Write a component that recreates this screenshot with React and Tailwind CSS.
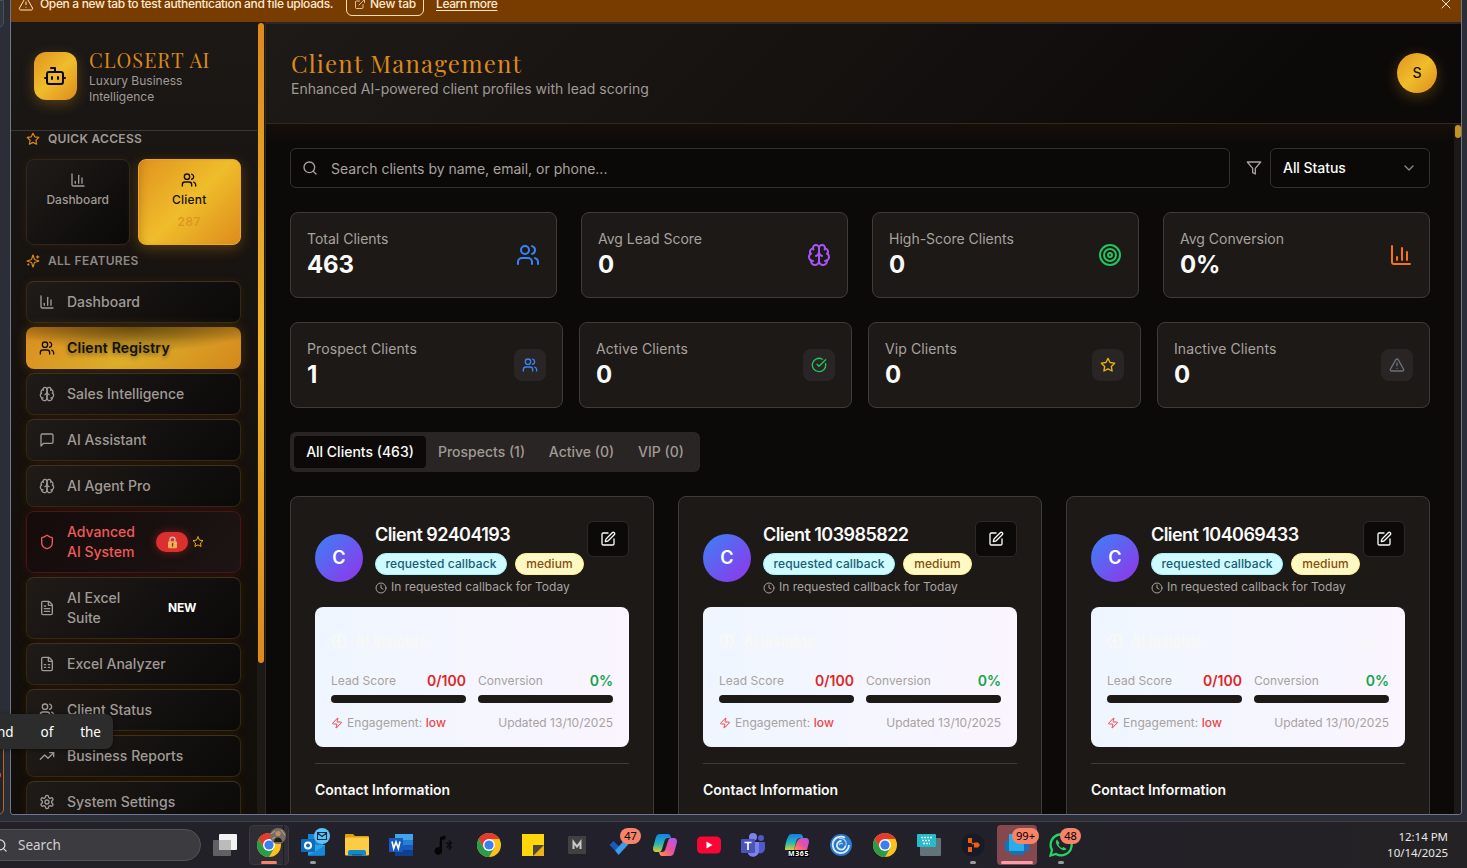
import React from "react";
import {
  Bot, Users, Shield, FileText, FileSpreadsheet, TrendingUp, Search, ChevronDown, Target,
  CircleCheckBig, TriangleAlert, SquarePen, Clock, Zap, RefreshCw, ExternalLink, X, ChartColumn,
} from "lucide-react";

function Glyph({ className, children }) {
  return (
    <svg className={className} viewBox="0 0 24 24" fill="none" stroke="currentColor" strokeWidth="2" strokeLinecap="round" strokeLinejoin="round">
      {children}
    </svg>
  );
}
const Brain = ({ className }) => (
  <Glyph className={className}>
    <path d="M12 5a3 3 0 1 0-5.997.125 4 4 0 0 0-2.526 5.77 4 4 0 0 0 .556 6.588A4 4 0 1 0 12 18Z" />
    <path d="M12 5a3 3 0 1 1 5.997.125 4 4 0 0 1 2.526 5.77 4 4 0 0 1-.556 6.588A4 4 0 1 1 12 18Z" />
    <path d="M15 13a4.5 4.5 0 0 1-3-4 4.5 4.5 0 0 1-3 4" />
    <path d="M17.599 6.5a3 3 0 0 0 .399-1.375M6.003 5.125A3 3 0 0 0 6.401 6.5M3.477 10.896a4 4 0 0 1 .585-.396M19.938 10.5a4 4 0 0 1 .585.396M6 18a4 4 0 0 1-1.967-.516M19.967 17.484A4 4 0 0 1 18 18" />
  </Glyph>
);
const Star = ({ className }) => (
  <Glyph className={className}>
    <polygon points="12 2 15.09 8.26 22 9.27 17 14.14 18.18 21.02 12 17.77 5.82 21.02 7 14.14 2 9.27 8.91 8.26 12 2" />
  </Glyph>
);
const Funnel = ({ className }) => (
  <Glyph className={className}>
    <polygon points="22 3 2 3 10 12.46 10 19 14 21 14 12.46 22 3" />
  </Glyph>
);
const Message = ({ className }) => (
  <Glyph className={className}>
    <path d="M21 15a2 2 0 0 1-2 2H7l-4 4V5a2 2 0 0 1 2-2h14a2 2 0 0 1 2 2z" />
  </Glyph>
);
const Sparkles = ({ className }) => (
  <Glyph className={className}>
    <path d="M9.937 15.5A2 2 0 0 0 8.5 14.063l-6.135-1.582a.5.5 0 0 1 0-.962L8.5 9.936A2 2 0 0 0 9.937 8.5l1.582-6.135a.5.5 0 0 1 .963 0L14.063 8.5A2 2 0 0 0 15.5 9.937l6.135 1.581a.5.5 0 0 1 0 .964L15.5 14.063a2 2 0 0 0-1.437 1.437l-1.582 6.135a.5.5 0 0 1-.963 0z" />
    <path d="M20 3v4M22 5h-4M4 17v2M5 18H3" />
  </Glyph>
);
const Gear = ({ className }) => (
  <Glyph className={className}>
    <path d="M12.22 2h-.44a2 2 0 0 0-2 2v.18a2 2 0 0 1-1 1.73l-.43.25a2 2 0 0 1-2 0l-.15-.08a2 2 0 0 0-2.73.73l-.22.38a2 2 0 0 0 .73 2.73l.15.1a2 2 0 0 1 1 1.72v.51a2 2 0 0 1-1 1.74l-.15.09a2 2 0 0 0-.73 2.73l.22.38a2 2 0 0 0 2.73.73l.15-.08a2 2 0 0 1 2 0l.43.25a2 2 0 0 1 1 1.73V20a2 2 0 0 0 2 2h.44a2 2 0 0 0 2-2v-.18a2 2 0 0 1 1-1.73l.43-.25a2 2 0 0 1 2 0l.15.08a2 2 0 0 0 2.73-.73l.22-.39a2 2 0 0 0-.73-2.73l-.15-.08a2 2 0 0 1-1-1.74v-.5a2 2 0 0 1 1-1.74l.15-.09a2 2 0 0 0 .73-2.73l-.22-.38a2 2 0 0 0-2.73-.73l-.15.08a2 2 0 0 1-2 0l-.43-.25a2 2 0 0 1-1-1.73V4a2 2 0 0 0-2-2z" />
    <circle cx="12" cy="12" r="3" />
  </Glyph>
);

const gold = "bg-[linear-gradient(135deg,#e1931f_0%,#efbd2b_50%,#dd8c1c_100%)]";

function Banner() {
  return (
    <div className="flex h-[22px] shrink-0 items-start overflow-hidden bg-[#783c00] pl-[7px] pr-[7px] text-[12px] leading-4 text-[#ffe9cf]">
      <TriangleAlert className="mt-[-4px] size-4" strokeWidth={1.5} />
      <span className="ml-[6px] w-[306px] mt-[-4px] whitespace-nowrap tracking-[-0.35px] font-medium">Open a new tab to test authentication and file uploads.</span>
      <div className="mt-[-9px] flex h-[25px] w-[78px] shrink-0 items-center justify-center gap-1 rounded-[6px] border border-[#ffe0b8] font-medium tracking-[-0.2px]">
        <ExternalLink className="size-3" strokeWidth={1.5} />
        <span>New tab</span>
      </div>
      <span className="ml-3 mt-[-4px] font-medium tracking-[-0.4px] underline underline-offset-2">Learn more</span>
      <X className="ml-auto mt-[-4px] size-4" strokeWidth={1.5} />
    </div>
  );
}

const navItems = [
  { icon: ChartColumn, label: "Dashboard" },
  { icon: Users, label: "Client Registry", active: true },
  { icon: Brain, label: "Sales Intelligence" },
  { icon: Message, label: "AI Assistant" },
  { icon: Brain, label: "AI Agent Pro" },
  { icon: Shield, label: "Advanced AI System", danger: true },
  { icon: FileText, label: "AI Excel Suite", fresh: true },
  { icon: FileSpreadsheet, label: "Excel Analyzer" },
  { icon: Users, label: "Client Status" },
  { icon: TrendingUp, label: "Business Reports" },
  { icon: Gear, label: "System Settings" },
];

function NavItem({ icon: Icon, label, active, danger, fresh }) {
  const tone = active
    ? "border-transparent bg-origin-border bg-[radial-gradient(ellipse_55%_60%_at_50%_0%,rgba(60,36,5,0.6)_0%,rgba(60,36,5,0.35)_50%,rgba(60,36,5,0)_100%),linear-gradient(180deg,rgba(70,42,5,0.3)_0%,rgba(70,42,5,0)_35%),linear-gradient(135deg,#d98c1f_0%,#dcae2a_50%,#d4881c_100%)] text-[#12100c] shadow-[0_0_12px_rgba(217,145,30,0.25)] [text-shadow:0_2px_4px_rgba(0,0,0,0.45)]"
    : danger
    ? "border-[#4d1417] bg-[linear-gradient(135deg,#140b0a,#1c1513)] text-[#ef5a5a] shadow-[0_0_10px_rgba(150,20,20,0.2)]"
    : "border-[#36270f] border-t-[#40301f] bg-[linear-gradient(135deg,#1f1b18_0%,#0b0a09_100%)] text-[#a09a95] shadow-[0_0_10px_rgba(190,115,15,0.10)]";
  return (
    <div className={"flex shrink-0 items-center rounded-lg border px-3 py-[10px] " + tone}>
      <Icon className="size-4 shrink-0" />
      <span className={"ml-3 text-sm " + (danger ? "w-[77px] " : fresh ? "w-[64px] " : "whitespace-nowrap ") + (active ? "font-semibold tracking-[0.24px]" : "font-medium")}>{label}</span>
      {danger && (
        <div className="ml-3 flex items-center gap-1">
          <span className="flex h-5 w-8 items-center justify-center rounded-full bg-[#dc3030] shadow-[0_0_8px_rgba(220,40,40,0.5)]">
            <svg className="h-[13px] w-[11px]" viewBox="0 0 11 13">
              <path d="M3 6V3.7a2.5 2.5 0 0 1 5 0V6" fill="none" stroke="#c9b7b5" strokeWidth="1.5" />
              <rect x="1" y="5.3" width="9" height="7" rx="1" fill="#f5a94a" />
              <path d="M1 7.5h9M1 9.7h9" stroke="#f9c07d" strokeWidth=".7" />
              <rect x="4.9" y="7" width="1.3" height="3.5" fill="#5b3a1d" />
            </svg>
          </span>
          <Star className="size-3 text-[#eab308]" />
        </div>
      )}
      {fresh && <span className="ml-[37px] text-xs font-bold tracking-[-0.2px] text-white">NEW</span>}
    </div>
  );
}

function Sidebar() {
  return (
    <aside className="flex w-[255px] shrink-0 border-r border-[#33261a] bg-[#16120f]">
      <div className="flex w-[246px] flex-col overflow-hidden bg-[linear-gradient(180deg,#1b1816_0%,#191512_20%,#15100b_60%,#120e09_100%)]">
        <div className="flex h-[109px] shrink-0 items-center border-b border-[#3c3835] pl-[23px]">
          <div className={"flex h-12 w-[43px] items-center justify-center rounded-xl pr-px shadow-[0_4px_14px_rgba(225,150,30,0.3)] " + gold}>
            <Bot className="size-6 text-[#0c0a09]" />
          </div>
          <div className="ml-3">
            <div className="whitespace-nowrap font-['Playfair_Display','Liberation_Serif',serif] text-[20px] leading-[26px] tracking-[0.05em] text-[#dc8a1c]">CLOSERT AI</div>
            <div className="w-[110px] text-xs leading-4 text-[#a09a95]">Luxury Business Intelligence</div>
          </div>
        </div>
        <div className="flex flex-col pl-[15px] pr-4">
          <div className="flex h-4 items-center gap-2 text-xs font-semibold tracking-[0.3px] text-[#a09a95]">
            <Star className="size-[14px] text-[#d98a1c]" />
            QUICK ACCESS
          </div>
          <div className="mt-3 grid grid-cols-2 gap-2">
            <div className="flex h-[86px] flex-col items-center rounded-lg border border-[#33261a] bg-[linear-gradient(135deg,#1f1b18_0%,#0a0908_100%)] pt-3 text-[#a09a95] shadow-[0_0_10px_rgba(190,115,15,0.08)]">
              <ChartColumn className="size-4" />
              <span className="mt-1 text-xs font-medium">Dashboard</span>
            </div>
            <div className={"flex h-[86px] flex-col items-center rounded-lg border border-[#eba624] pt-3 text-[#15110a] shadow-[0_4px_14px_rgba(225,150,30,0.3),inset_8px_0_10px_-8px_rgba(120,70,0,0.4)] " + gold}>
              <Users className="size-4" />
              <span className="mt-1 text-xs font-medium tracking-[0.2px]">Client</span>
              <span className="mt-1.5 text-xs font-medium tracking-[0.5px] text-[#dd9521]">287</span>
            </div>
          </div>
          <div className="mt-2 flex h-4 items-center gap-2 text-xs font-semibold tracking-[0.3px] text-[#8e8883]">
            <Sparkles className="size-[14px] text-[#d98a1c]" />
            ALL FEATURES
          </div>
          <nav className="mt-3 flex flex-col gap-1">
            {navItems.map((n) => <NavItem key={n.label} {...n} />)}
          </nav>
        </div>
      </div>
      <div className="flex w-2 justify-center bg-[#1d1916] pt-px">
        <div className="h-[640px] w-[6px] rounded-full bg-[linear-gradient(180deg,#dc8a1c_0%,#efb729_50%,#dc8a1c_100%)]" />
      </div>
    </aside>
  );
}

const stats = [
  { label: "Total Clients", value: "463", icon: Users, color: "text-[#3b82f6]" },
  { label: "Avg Lead Score", value: "0", icon: Brain, color: "text-[#a855f7]" },
  { label: "High-Score Clients", value: "0", icon: Target, color: "text-[#22c55e]" },
  { label: "Avg Conversion", value: "0%", icon: ChartColumn, color: "text-[#f97316]" },
];
const segments = [
  { label: "Prospect Clients", value: "1", icon: Users, color: "text-[#3b82f6]" },
  { label: "Active Clients", value: "0", icon: CircleCheckBig, color: "text-[#22c55e]" },
  { label: "Vip Clients", value: "0", icon: Star, color: "text-[#eab308]" },
  { label: "Inactive Clients", value: "0", icon: TriangleAlert, color: "text-[#6b7280]" },
];

function StatCard({ label, value, icon: Icon, color, boxed }) {
  return (
    <div className="flex h-[86px] items-center justify-between rounded-lg border border-[#3f3b38] bg-[#1c1917] px-4">
      <div>
        <div className={"text-sm text-[#a8a29e] " + (boxed ? "tracking-[0.1px]" : "")}>{label}</div>
        <div className="text-2xl font-bold tracking-[-0.15px] text-[#fafaf9]">{value}</div>
      </div>
      {boxed ? (
        <div className="flex size-8 items-center justify-center rounded-lg bg-[#292524]">
          <Icon className={"size-4 " + color} />
        </div>
      ) : (
        <Icon className={"size-6 " + color} />
      )}
    </div>
  );
}

function Meter({ label, value, color }) {
  return (
    <div>
      <div className="flex h-5 items-center justify-between">
        <span className="text-xs tracking-[0.05px] text-[#a8a29e]">{label}</span>
        <span className={"text-sm font-semibold " + color}>{value}</span>
      </div>
      <div className="mt-1 h-2 rounded-full bg-[#1c1917]" />
    </div>
  );
}

function ClientCard({ name }) {
  return (
    <div className="h-[340px] rounded-lg border border-[#3f3b38] bg-[#1c1917] p-6">
      <div className="flex items-start">
        <div className="mt-[13px] flex size-12 shrink-0 items-center justify-center rounded-full bg-[linear-gradient(135deg,#3b82f6,#9333ea)] text-lg font-semibold text-white">C</div>
        <div className="ml-3 flex flex-1 flex-col">
          <div className="text-lg leading-7 font-semibold tracking-[-0.56px] text-[#fafaf9]">{name}</div>
          <div className="mt-1 flex gap-2 text-xs font-medium tracking-[0.1px]">
            <span className="flex h-[22px] w-[132px] items-center justify-center rounded-full border border-[#a5f3fc] bg-[#cffafe] text-[#155e75]">requested callback</span>
            <span className="flex h-[22px] w-[69px] items-center justify-center rounded-full border border-[#fef08a] bg-[#fef9c3] text-[#854d0e]">medium</span>
          </div>
          <div className="mt-1 flex h-4 items-center gap-1 text-xs whitespace-nowrap text-[#a8a29e]">
            <Clock className="mt-px size-3" />
            In requested callback for Today
          </div>
        </div>
        <div className="flex h-9 w-[42px] shrink-0 items-center justify-center rounded-md border border-[#2c2826] bg-[#0c0a09] text-[#fafaf9]">
          <SquarePen className="size-4" />
        </div>
      </div>
      <div className="mt-3 h-[140px] rounded-lg bg-[linear-gradient(90deg,#eff6ff,#faf5ff)] p-4">
        <div className="flex h-9 items-center text-[#f8f9f3]">
          <Brain className="size-4" />
          <span className="ml-2 text-sm font-semibold">AI Insights</span>
          <RefreshCw className="mr-3 ml-auto size-4 text-[#f9f6f5]" />
        </div>
        <div className="mt-3 grid grid-cols-2 gap-3">
          <Meter label="Lead Score" value="0/100" color="text-[#dc2626]" />
          <Meter label="Conversion" value="0%" color="text-[#16a34a]" />
        </div>
        <div className="mt-3 flex h-4 items-center text-xs text-[#a8a29e]">
          <Zap className="size-3 text-[#ef4444]" />
          <span className="ml-1 tracking-[0.05px]">Engagement: <span className="font-medium text-[#ef4444]">low</span></span>
          <span className="ml-auto">Updated 13/10/2025</span>
        </div>
      </div>
      <div className="mt-4 border-t border-[#3f3b38] pt-4">
        <div className="text-sm font-semibold text-[#fafaf9]">Contact Information</div>
      </div>
    </div>
  );
}

function Main() {
  return (
    <main className="flex min-w-0 flex-1 flex-col bg-[#0c0a09]">
      <header className="flex h-[102px] shrink-0 items-center justify-between border-t-2 border-b border-t-[#2b2826] border-b-[#38281b] bg-[linear-gradient(135deg,#1e1a17_0%,#151210_45%,#0c0a09_85%)] pr-6 pb-[2px] pl-[25px]">
        <div>
          <h1 className="font-['Playfair_Display','Liberation_Serif',serif] text-2xl leading-8 tracking-[0.05em] text-[#dc8a1c]">Client Management</h1>
          <p className="text-sm text-[#a09a95]">Enhanced AI-powered client profiles with lead scoring</p>
        </div>
        <div className={"flex size-10 items-center justify-center rounded-full text-sm font-medium text-[#1a1408] shadow-[0_4px_14px_rgba(225,150,30,0.3)] " + gold}>S</div>
      </header>
      <div className="flex min-h-0 flex-1">
        <div className="flex min-w-0 flex-1 flex-col gap-6 overflow-hidden bg-[linear-gradient(180deg,#150f09_0px,#0c0a09_20px)] px-6 pt-6">
          <div className="flex h-10 shrink-0 items-center">
            <div className="flex h-10 flex-1 items-center rounded-md border border-[#33302d] bg-[#0b0908] pl-[11px] text-[#a8a29e]">
              <Search className="size-4" />
              <span className="mt-[2px] ml-[13px] text-sm">Search clients by name, email, or phone...</span>
            </div>
            <Funnel className="ml-4 size-4 text-[#a8a29e]" />
            <div className="ml-2 flex h-10 w-40 items-center justify-between rounded-md border border-[#33302d] bg-[#0b0908] px-3 text-sm font-medium tracking-[-0.05px] text-[#fafaf9]">
              All Status
              <ChevronDown className="size-4 text-[#8a8580]" />
            </div>
          </div>
          <div className="grid grid-cols-4 gap-6">
            {stats.map((s) => <StatCard key={s.label} {...s} />)}
          </div>
          <div className="grid grid-cols-4 gap-4">
            {segments.map((s) => <StatCard key={s.label} boxed {...s} />)}
          </div>
          <div className="flex h-10 w-[410px] shrink-0 items-center rounded-md bg-[#292524] p-1 text-sm font-medium text-[#a09a95]">
            <span className="flex h-8 w-[132px] items-center justify-center rounded bg-[#0c0a09] text-[#fafaf9]">All Clients (463)</span>
            <span className="flex w-[111px] justify-center">Prospects (1)</span>
            <span className="flex w-[89px] justify-center">Active (0)</span>
            <span className="flex w-[70px] justify-center">VIP (0)</span>
          </div>
          <div className="grid shrink-0 grid-cols-3 gap-6">
            <ClientCard name="Client 92404193" />
            <ClientCard name="Client 103985822" />
            <ClientCard name="Client 104069433" />
          </div>
        </div>
        <div className="flex w-[7px] shrink-0 justify-end bg-[#1c1917] pt-px">
          <div className="h-[13px] w-[6px] rounded-full bg-[#c4921f]" />
        </div>
      </div>
    </main>
  );
}

/* Taskbar icons, each on a 24-unit canvas */
const Chrome = () => (
  <svg className="size-6" viewBox="0 0 24 24">
    <circle cx="12" cy="12" r="12" fill="#fbc21b" />
    <path d="M12 12 6.8 15 1.6 6A12 12 0 0 1 22.4 6H12Z" fill="#e33b2e" />
    <path d="M1.6 6 6.8 15 12 18l-1 6A12 12 0 0 1 1.6 6Z" fill="#2a9b48" />
    <path d="M17.2 15 12 24h-1.500L12 17Z" fill="#2a9b48" />
    <circle cx="12" cy="12" r="6" fill="#fff" />
    <circle cx="12" cy="12" r="4.600" fill="#3b7ff0" />
  </svg>
);
const TaskView = () => (
  <svg className="size-6" viewBox="0 0 24 24">
    <rect x="6" y="1" width="18" height="16" rx="1" fill="#f2f2f2" />
    <rect x="0" y="7" width="18" height="16" rx="1" fill="#777" fillOpacity=".75" />
    <path d="M6 7h12v10H6z" fill="#bbb" />
  </svg>
);
const Outlook = () => (
  <svg className="size-6" viewBox="0 0 24 24">
    <rect x="7" y="1" width="15" height="13" fill="#1d82cf" />
    <path d="M7 12h17v9a1.500 1.500 0 0 1-1.500 1.500H7Z" fill="#27a5e8" />
    <path d="m7 22.500 17-10v9a1 1 0 0 1-1 1Z" fill="#1688d6" />
    <rect x="0" y="6" width="14" height="13" rx="1" fill="#0f6cbd" />
    <circle cx="7" cy="12.500" r="3" fill="none" stroke="#fff" strokeWidth="2" />
  </svg>
);
const Folder = () => (
  <svg className="size-6" viewBox="0 0 24 24">
    <path d="M0 2a1 1 0 0 1 1-1h7l2 2h13a1 1 0 0 1 1 1v17H0Z" fill="#e0a012" />
    <rect x="0" y="4.500" width="24" height="18" rx="1" fill="#fccc44" />
    <path d="M3 22.500V19a2 2 0 0 1 2-2h14a2 2 0 0 1 2 2v3.500Z" fill="#1787c8" />
    <path d="M7 22.500v-1.500h10v1.500Z" fill="#0b62a0" />
  </svg>
);
const Word = () => (
  <svg className="size-6" viewBox="0 0 24 24">
    <rect x="6" y="1" width="18" height="22" rx="1" fill="#2b7cd3" />
    <path d="M6 1h18v6H6z" fill="#41a5ee" />
    <path d="M6 17h18v6H6z" fill="#103f91" />
    <path d="M6 12h18v5H6z" fill="#185abd" />
    <rect x="0" y="5" width="14" height="14" rx="1" fill="#185abd" />
    <path d="m3 8.500 1.700 7L7 9l2.300 6.500 1.700-7" fill="none" stroke="#fff" strokeWidth="1.600" />
  </svg>
);
const Music = () => (
  <svg className="size-6" viewBox="0 0 24 24">
    <path d="M7 4 12.500 2.500V6L9 7v10.500a3.800 3.800 0 1 1-2.500-3Z" fill="#050505" />
    <path d="m13.500 9.500 5 4.500-2 2V8l2 2-5 4.500" fill="none" stroke="#0b0b0c" strokeWidth="1.300" />
  </svg>
);
const Sticky = () => (
  <svg className="size-6" viewBox="0 0 24 24">
    <path d="M1 1h22v22H1Z" fill="#ffd60a" />
    <path d="M12 23V12h11v11Z" fill="#eeb310" />
    <path d="M12 23V12h11Z" fill="#4a4638" />
  </svg>
);
const LetterM = () => (
  <svg className="size-6" viewBox="0 0 24 24">
    <rect x="3" y="3" width="18" height="18" rx="1" fill="#414141" />
    <path d="M8.500 16V9l3.500 4.500L15.500 9v7" fill="none" stroke="#c9c9c9" strokeWidth="2" />
  </svg>
);
const Todo = () => (
  <svg className="size-6" viewBox="0 0 24 24">
    <path d="m-1 12 4-4 6 6-4 4Z" fill="#195abd" transform="translate(1.500 0)" />
    <path d="m6 18 12-13 4 4-12.500 13.500Z" fill="#3c9bea" transform="translate(0 -.5)" />
  </svg>
);
const Copilot = () => (
  <svg className="size-6" viewBox="0 0 24 24">
    <defs>
      <linearGradient id="cpA" x1="0" y1="0" x2="0" y2="1"><stop offset="0" stopColor="#1480e8" /><stop offset=".55" stopColor="#25b7b5" /><stop offset="1" stopColor="#d9ce2b" /></linearGradient>
      <linearGradient id="cpB" x1="1" y1="0" x2="0" y2="1"><stop offset="0" stopColor="#a55cf0" /><stop offset=".5" stopColor="#e84fa0" /><stop offset="1" stopColor="#ff9248" /></linearGradient>
    </defs>
    <path d="M7 1h8c2 0 2.500 2 3 4h-3c-2 0-3 1-3.500 3L9 16c-.5 2-1.500 3-3 3H3c-3 0-3.500-3-2.500-6L3 4c.7-2 2-3 4-3Z" fill="url(#cpA)" />
    <path d="M17 23H9c-2 0-2.500-2-3-4h3c2 0 3-1 3.500-3L15 8c.5-2 1.500-3 3-3h3c3 0 3.500 3 2.500 6L21 20c-.7 2-2 3-4 3Z" fill="url(#cpB)" />
  </svg>
);
const YouTube = () => (
  <svg className="size-6" viewBox="0 0 24 24">
    <rect x="0" y="3.500" width="24" height="17" rx="4.500" fill="#f90636" />
    <path d="m9.500 8.500 6 3.500-6 3.500Z" fill="#fff" />
  </svg>
);
const Teams = () => (
  <svg className="size-6" viewBox="0 0 24 24">
    <circle cx="12" cy="4" r="4" fill="#7b83eb" />
    <circle cx="20" cy="5" r="3" fill="#5059c9" />
    <path d="M14 9h9a1 1 0 0 1 1 1v6a5 5 0 0 1-7 4Z" fill="#5059c9" />
    <path d="M7 9h11v9a6 6 0 0 1-11 3Z" fill="#7b83eb" />
    <rect x="0" y="6" width="14" height="14" rx="1" fill="#4b53bc" />
    <path d="M3.500 9.500h7M7 9.500V17" stroke="#fff" strokeWidth="1.700" />
  </svg>
);
const M365 = () => (
  <div className="flex size-6 flex-col">
    <svg className="h-[17px] w-6" viewBox="0 0 24 17">
      <path d="M7 1h8c2 0 3 2 3 4h-3c-2 0-3 1-4 4l-2 8H0c0-5 1-9 3-13 .7-2 2-3 4-3Z" fill="url(#cpA)" />
      <path d="M11 11c1-4 3-6 6-6h4c3 0 3.500 3 2.500 6l-1.500 6H9Z" fill="url(#cpB)" />
    </svg>
    <span className="ml-[3px] flex h-[7px] w-[21px] items-center justify-center bg-black text-[7px] leading-none font-bold tracking-[0.6px] text-white">M365</span>
  </div>
);
const Swirl = () => (
  <svg className="size-6" viewBox="0 0 24 24">
    <circle cx="12" cy="12" r="11" fill="#2b78c8" />
    <path d="M16 4.800A8.200 8.200 0 1 0 20 12" fill="none" stroke="#d9ecfb" strokeWidth="1.800" />
    <path d="M12.500 8A4.300 4.300 0 1 0 16.500 12.500" fill="none" stroke="#d9ecfb" strokeWidth="1.800" />
    <path d="M10 5.500c4-1 8 2 7 7M14 11c-1-1-3-1-4 1" fill="none" stroke="#a9d0f0" strokeWidth="1.200" />
  </svg>
);
const Keyboard = () => (
  <svg className="size-6" viewBox="0 0 24 24">
    <rect x="3" y="5" width="21" height="18" rx="1" fill="#62747a" />
    <rect x="0" y="1" width="19" height="13" rx="1" fill="#27bccb" />
    <path d="M4 4.500h11M5 7.500h9M6 10.500h7" stroke="#eefcff" strokeWidth="1.500" strokeDasharray="2 1" />
  </svg>
);
const Remote = () => (
  <svg className="size-6" viewBox="0 0 24 24">
    <circle cx="12" cy="12" r="11.500" fill="#171b27" />
    <path d="M7 5h4v5H7zM7 14h4v5H7zM13 9.500h4l2 2.500-2 2.500h-4ZM10 9l4 2-3 .500Z" fill="#f45d10" />
  </svg>
);
const Desktop = () => (
  <svg className="size-6" viewBox="0 0 24 24">
    <path d="M0 8h24v10H0Z" fill="#1572bd" />
    <path d="M4 1h15v17H4Z" fill="#27aeea" />
    <path d="M5 18h14v4H5Z" fill="#1e6fae" />
  </svg>
);
const WhatsApp = () => (
  <svg className="size-6" viewBox="0 0 24 24">
    <path d="M1.500 22.500 3 17A10.500 10.500 0 1 1 7 21Z" fill="none" stroke="#25d366" strokeWidth="2.300" />
    <path d="M8 6.500c-2 2-1 5 2 8s6 3.500 7.500 1.500l-3-2-1.500 1c-1.500-.5-3-2-3.500-3.500l1-1.500Z" fill="#25d366" />
  </svg>
);

const apps = [
  { icon: TaskView }, { icon: Chrome, hot: true, photo: true }, { icon: Outlook, dot: true, mail: true }, { icon: Folder },
  { icon: Word }, { icon: Music }, { icon: Chrome }, { icon: Sticky }, { icon: LetterM }, { icon: Todo, badge: "47" },
  { icon: Copilot }, { icon: YouTube }, { icon: Teams }, { icon: M365 }, { icon: Swirl }, { icon: Chrome },
  { icon: Keyboard }, { icon: Remote, dot: true }, { icon: Desktop, alert: true, badge: "99+" }, { icon: WhatsApp, dot: true, badge: "48" },
];

function AppCell({ icon: Icon, hot, photo, dot, mail, badge, alert }) {
  return (
    <div className="flex w-11 justify-center">
      <div className={"relative flex h-10 w-10 items-center justify-center rounded " + (hot ? "border border-[#3b393f] bg-[#302e34]" : alert ? "bg-[#85484f]" : "")}>
        <Icon />
        {hot && <span className="absolute -top-px right-[4px] h-10 w-px bg-[#1f1d22]" />}
        {photo && (
          <svg className="absolute top-[2px] right-[2px] size-4" viewBox="0 0 16 16">
            <circle cx="8" cy="8" r="8" fill="#766d61" />
            <circle cx="8" cy="5.500" r="2.600" fill="#c28c68" />
            <path d="M4 14c0-6 8-6 8 0Z" fill="#201c1b" />
            <path d="M1 6l4-3M11 2l4 5M2 11l3-2" stroke="#b0a99d" strokeWidth="1" />
          </svg>
        )}
        {mail && (
          <svg className="absolute top-[3px] right-[3px] size-4" viewBox="0 0 16 16">
            <circle cx="8" cy="8" r="8" fill="#5cc4fa" />
            <path d="M3.500 4.500h9v7h-9ZM3.500 5 8 8.500 12.500 5" fill="none" stroke="#102a3a" strokeWidth="1.100" />
          </svg>
        )}
        {badge && (
          <span className={"absolute top-[3px] flex h-4 items-center justify-center rounded-full bg-[#f78368] font-['Noto_Sans',sans-serif] text-[11px] text-black " + (badge.length > 2 ? "left-[15px] w-[27px]" : "left-[19px] w-[21px]")}>{badge}</span>
        )}
        {hot && <span className="absolute bottom-0 h-[3px] w-4 rounded-full bg-[#f78368]" />}
        {alert && <span className="absolute bottom-[1px] h-[3px] w-8 rounded-full bg-[#ff9aa8]" />}
        {dot && <span className="absolute bottom-[1px] h-[3px] w-[6px] rounded-full bg-[#9b9b9f]" />}
      </div>
    </div>
  );
}

function Taskbar() {
  return (
    <div className="flex h-[47px] shrink-0 items-start border-t border-[#403f44] bg-[linear-gradient(90deg,#232127_0%,#22202b_50%,#242224_100%)] pt-[3px] font-['Noto_Sans',sans-serif]">
      <div className="mt-1 ml-[-20px] flex h-8 w-[221px] items-center rounded-full border border-[#535256] bg-[#3c3b3f] pl-[12px]">
        <Search className="size-[15px] text-[#dddddd]" />
        <span className="mt-px ml-[10px] text-[13.500px] text-[#cfcfd1]">Search</span>
      </div>
      <div className="ml-[2px] flex">
        {apps.map((a, i) => <AppCell key={i} {...a} />)}
      </div>
      <div className="mt-[4px] mr-[19px] ml-auto text-right text-[11.500px] leading-4 tracking-[-0.03px] text-[#e8e8e8]">
        <div>12:14 PM</div>
        <div>10/14/2025</div>
      </div>
    </div>
  );
}

export default function App() {
  return (
    <div className="relative flex h-[868px] w-[1467px] flex-col overflow-hidden bg-[#2b2e37] font-['Inter',sans-serif]">
      <div className="flex h-[821px] shrink-0">
        <div className="flex w-[10px] shrink-0 flex-col justify-between overflow-hidden pb-[6px]">
          <div className="ml-[-8px] h-7 w-3 rounded-b-md border border-[#4b4f5c] bg-[#333640]" />
          <div className="ml-[-8px] flex h-[80px] w-3 flex-col rounded-b-md border border-[#b56a1b] bg-[#22252c] pt-9">
            <span className="ml-[2px] size-[6px] rounded-full bg-[#ef4444]" />
          </div>
        </div>
        <div className="flex h-[815px] w-[1452px] shrink-0 flex-col overflow-hidden rounded-b border border-t-0 border-[#6f778c]">
          <Banner />
          <div className="flex min-h-0 flex-1">
            <Sidebar />
            <Main />
          </div>
        </div>
      </div>
      <Taskbar />
      <div className="absolute top-[714px] left-0 flex h-[35px] w-[113px] items-center justify-between rounded-r-lg bg-[#2c2c2c] pt-[2px] pr-3 font-['Noto_Sans',sans-serif] text-[13.500px] text-white shadow-[0_1px_4px_rgba(0,0,0,0.5)]">
        <span className="ml-[-3px]">nd</span>
        <span>of</span>
        <span>the</span>
      </div>
    </div>
  );
}
